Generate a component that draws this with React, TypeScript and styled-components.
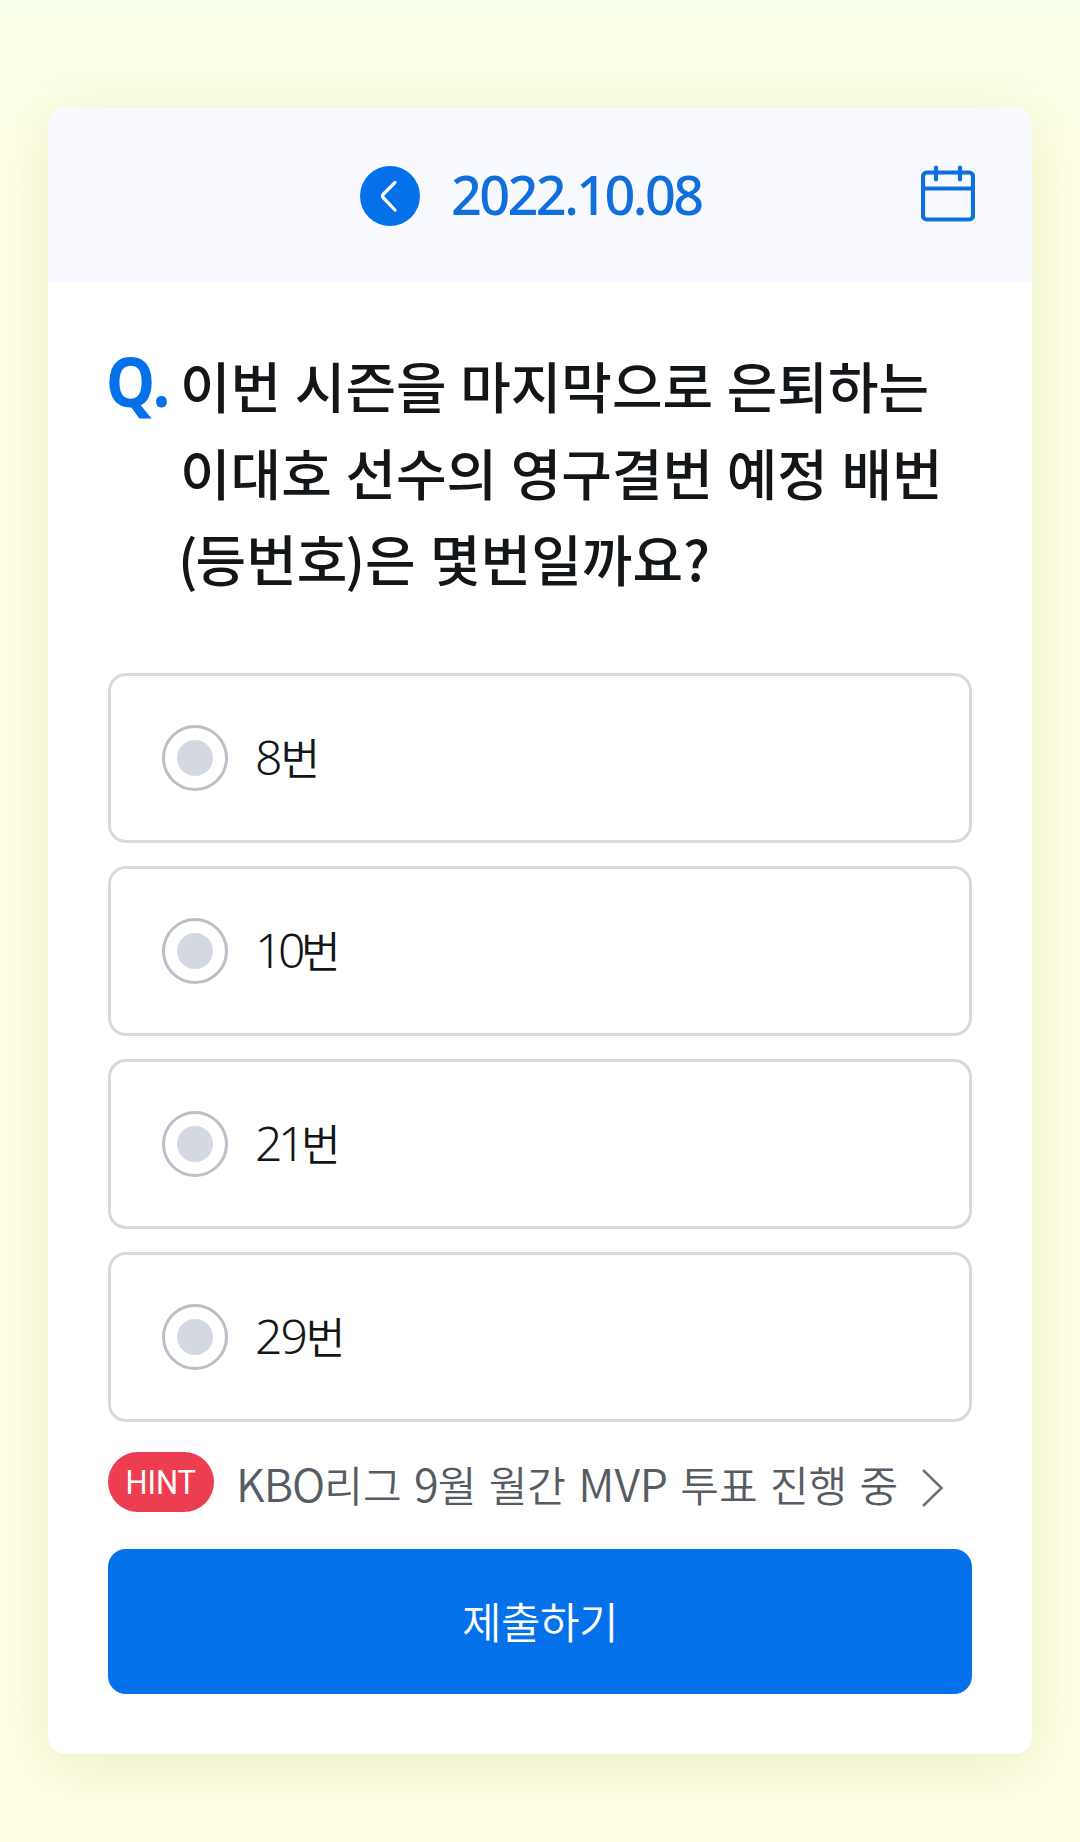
import React, { useState } from "react";
import styled, { createGlobalStyle } from "styled-components";

const hangul = `"Noto Sans CJK KR", sans-serif`;
const latin = `"Noto Sans", "Noto Sans CJK KR", sans-serif`;

const GlobalStyle = createGlobalStyle`
  *, *::before, *::after { box-sizing: border-box; }
  body { margin: 0; background: #fffee5; font-family: ${hangul}; }
  button { font: inherit; border: 0; padding: 0; background: none; cursor: pointer; }
`;

const Page = styled.main`
  width: 1080px;
  height: 1842px;
  padding: 108px 48px 0;
  overflow: hidden;
  background: linear-gradient(#f8ffe8 0, #fcffe7 80px, #feffe5 150px);
`;

const Card = styled.section`
  height: 1646px;
  border-radius: 18px;
  background: #fff;
  box-shadow: 0 12px 60px rgba(125, 130, 0, 0.14);
`;

const Header = styled.header`
  display: flex;
  align-items: center;
  height: 174px;
  padding: 2px 57px 0 312px;
  border-radius: 18px 18px 0 0;
  background: #f8faff;
`;

const PrevButton = styled.button`
  display: grid;
  place-items: center;
  width: 60px;
  height: 60px;
  border-radius: 50%;
  background: #0471eb;
`;

const DateText = styled.time`
  margin: -4px 0 0 31px;
  font: 500 54px/60px ${latin};
  letter-spacing: -2.6px;
  color: #106fdc;
`;

const CalendarButton = styled.button`
  width: 54px;
  height: 57px;
  margin: 0 0 5px auto;
`;

const Body = styled.div`
  padding: 58px 60px 0;
`;

const Question = styled.div`
  display: flex;
  align-items: flex-start;
  height: 333px;
`;

const QMark = styled.span`
  width: 74px;
  margin-left: -2px;
  font: 700 69px/81px ${latin};
  transform: scaleX(0.9);
  transform-origin: left;
  color: #0471eb;
`;

const QuestionText = styled.h1`
  margin: 1px 0 0;
  font-weight: 500;
  font-size: 55px;
  line-height: 86.5px;
  color: #131619;
`;

const Line = styled.span<{ $wordSpacing: number }>`
  display: block;
  white-space: nowrap;
  word-spacing: ${(p) => p.$wordSpacing}px;
`;

const Paren = styled.span<{ $spacing: number }>`
  margin-left: -2px;
  letter-spacing: ${(p) => p.$spacing}px;
`;

const Options = styled.div`
  display: flex;
  flex-direction: column;
  gap: 23px;
`;

const Option = styled.button`
  display: flex;
  align-items: center;
  gap: 27px;
  height: 170px;
  padding: 0 0 0 51px;
  border: 3px solid #d6dade;
  border-radius: 18px;
  text-align: left;
`;

const Radio = styled.span<{ $checked: boolean }>`
  display: grid;
  place-items: center;
  width: 66px;
  height: 66px;
  border: 3px solid ${(p) => (p.$checked ? "#0471eb" : "#b9c0c8")};
  border-radius: 50%;

  &::after {
    content: "";
    width: 36px;
    height: 36px;
    border-radius: 50%;
    background: ${(p) => (p.$checked ? "#0471eb" : "#d4d9e1")};
  }
`;

const OptionLabel = styled.span`
  margin-bottom: 4px;
  font-weight: 350;
  font-size: 43px;
  line-height: 60px;
  color: #131619;
`;

const Digits = styled.span<{ $spacing: number }>`
  font: 350 48px/60px ${latin};
  letter-spacing: ${(p) => p.$spacing}px;
`;

const Hint = styled.div`
  display: flex;
  align-items: center;
  height: 60px;
  margin: 30px 0 37px;
`;

const Badge = styled.span`
  display: flex;
  justify-content: center;
  width: 106px;
  height: 60px;
  border-radius: 30px;
  background: #ed3d50;
  color: #fff;
  font: 400 34px/61px Roboto, sans-serif;
`;

const BadgeLabel = styled.span`
  transform: scaleX(0.91);
`;

const HintText = styled.span`
  margin: 3px 0 0 22px;
  white-space: nowrap;
  font-weight: 350;
  font-size: 42px;
  line-height: 60px;
  word-spacing: 3px;
  color: #575c63;
`;

const Large = styled.span<{ $spacing: number }>`
  font-size: 45px;
  letter-spacing: ${(p) => p.$spacing}px;
`;

const HintArrow = styled.svg`
  margin: 12px 28px 0 auto;
`;

const Submit = styled.button`
  display: block;
  width: 100%;
  height: 145px;
  border-radius: 18px;
  background: #0471eb;

  && {
    padding-bottom: 3px;
    color: #fff;
    font-weight: 350;
    font-size: 43px;
    letter-spacing: -0.5px;
  }
`;

const answers = [
  { number: "8", spacing: -2 },
  { number: "10", spacing: -4.4 },
  { number: "21", spacing: -4.4 },
  { number: "29", spacing: -2 },
];

export default function App() {
  const [selected, setSelected] = useState<string | null>(null);
  return (
    <>
      <GlobalStyle />
      <Page>
        <Card>
          <Header>
            <PrevButton aria-label="이전">
              <svg width="60" height="60" viewBox="0 0 60 60" fill="none" stroke="#fff" strokeWidth="3.2" strokeLinecap="round">
                <path d="M35 16.5 L23.5 28 Q21.5 30 23.5 32 L35 44" />
              </svg>
            </PrevButton>
            <DateText>2022.10.08</DateText>
            <CalendarButton aria-label="달력">
              <svg width="54" height="57" viewBox="0 0 54 57" fill="none" stroke="#0e6fdf" strokeWidth="4.2" strokeLinecap="round">
                <rect x="2" y="7.5" width="50" height="47" rx="4" />
                <path d="M2 23.5H52M15 2.5V14.5M39 2.5V14.5" />
              </svg>
            </CalendarButton>
          </Header>
          <Body>
            <Question>
              <QMark>Q.</QMark>
              <QuestionText>
                <Line $wordSpacing={1.2}>이번 시즌을 마지막으로 은퇴하는</Line>
                <Line $wordSpacing={1.2}>이대호 선수의 영구결번 예정 배번</Line>
                <Line $wordSpacing={2}>
                  <Paren $spacing={-2}>(</Paren>등번호<Paren $spacing={0}>)</Paren>은 몇번일까요?
                </Line>
              </QuestionText>
            </Question>
            <Options>
              {answers.map(({ number, spacing }) => (
                <Option key={number} onClick={() => setSelected(number)}>
                  <Radio $checked={selected === number} />
                  <OptionLabel>
                    <Digits $spacing={spacing}>{number}</Digits>번
                  </OptionLabel>
                </Option>
              ))}
            </Options>
            <Hint>
              <Badge>
                <BadgeLabel>HINT</BadgeLabel>
              </Badge>
              <HintText>
                <Large $spacing={-1}>KBO</Large>리그 <Large $spacing={-1}>9</Large>월 월간{" "}
                <Large $spacing={-0.1}>MVP</Large> 투표 진행 중
              </HintText>
              <HintArrow width="22" height="38" viewBox="0 0 22 38" fill="none" stroke="#737477" strokeWidth="2.6">
                <path d="M1 1 L19.5 19 L1 37" />
              </HintArrow>
            </Hint>
            <Submit>제출하기</Submit>
          </Body>
        </Card>
      </Page>
    </>
  );
}
